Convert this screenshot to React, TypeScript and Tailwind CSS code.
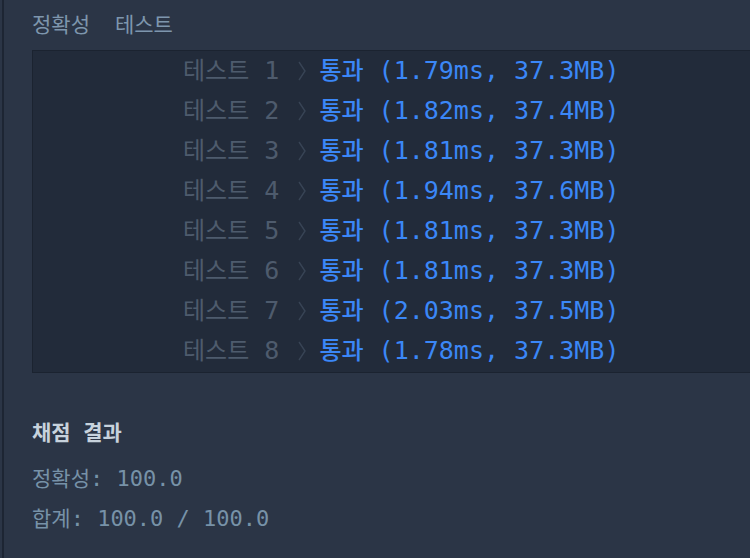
const results = [
  { no: 1, time: '1.79ms', mem: '37.3MB' },
  { no: 2, time: '1.82ms', mem: '37.4MB' },
  { no: 3, time: '1.81ms', mem: '37.3MB' },
  { no: 4, time: '1.94ms', mem: '37.6MB' },
  { no: 5, time: '1.81ms', mem: '37.3MB' },
  { no: 6, time: '1.81ms', mem: '37.3MB' },
  { no: 7, time: '2.03ms', mem: '37.5MB' },
  { no: 8, time: '1.78ms', mem: '37.3MB' },
];

const mono = { fontFamily: "'DejaVu Sans Mono', 'Noto Sans CJK KR', monospace" };

function Chevron() {
  return (
    <svg width="10" height="20" viewBox="0 0 10 20" className="inline-block align-middle ml-[18px] mr-[12px] -mt-[3px]">
      <path d="M2 1 L8 10 L2 19" fill="none" stroke="#384455" strokeWidth="1.4" />
    </svg>
  );
}

export default function App() {
  return (
    <div className="w-[750px] h-[558px] bg-[#2b3546] pl-[2px] overflow-hidden" style={mono}>
      <div className="h-full border-l-2 border-[#1d2533] pl-[28px]">
        {/* Tabs */}
        <div className="h-[50px] flex items-center gap-[25px] text-[21px] text-[#7e96ad] pb-[2px]" style={{ fontFamily: "'Noto Sans CJK KR', sans-serif" }}>
          <span>정확성</span>
          <span>테스트</span>
        </div>

        {/* Result table */}
        <div className="bg-[#222b3a] border border-r-0 border-[#1b2330] pb-px">
          {results.map((r) => (
            <div key={r.no} className="h-10 leading-10 pl-[150px] text-[25px] whitespace-pre">
              <span className="text-[#4e5b6d]">
                <span className="text-[24px]">테스트</span> {r.no}
              </span>
              <Chevron />
              <span className="text-[#3b87f7]">
                <span className="text-[24px] font-medium">통과</span> ({r.time}, {r.mem})
              </span>
            </div>
          ))}
        </div>

        {/* Summary */}
        <div className="pt-[40px]">
          <div className="h-10 leading-10 text-[21px] font-bold text-[#c7d2dc]">채점 결과</div>
          <div className="mt-[6px] h-10 leading-10 text-[22px] text-[#7792a8] whitespace-pre">
            <span className="text-[21px]">정확성</span>: 100.0
          </div>
          <div className="h-10 leading-10 text-[22px] text-[#7792a8] whitespace-pre">
            <span className="text-[21px]">합계</span>: 100.0 / 100.0
          </div>
        </div>
      </div>
    </div>
  );
}
